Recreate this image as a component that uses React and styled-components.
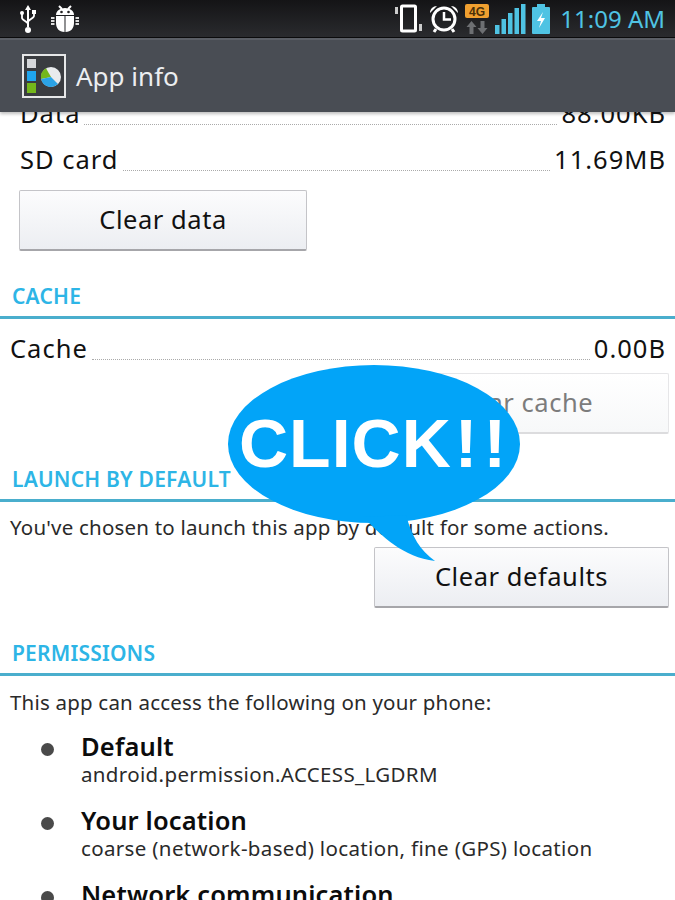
import React from 'react';
import styled, { createGlobalStyle } from 'styled-components';

const Global = createGlobalStyle`
  html, body {
    margin: 0;
    padding: 0;
    background: #fff;
  }
`;

const Screen = styled.div`
  position: relative;
  width: 675px;
  height: 900px;
  overflow: hidden;
  display: flex;
  flex-direction: column;
  background: #fff;
  font-family: 'Noto Sans', 'Open Sans', sans-serif;
  color: #111;
`;

const StatusBar = styled.div`
  height: 37px;
  flex: none;
  display: flex;
  align-items: center;
  justify-content: space-between;
  padding: 0 10px 0 19px;
  background: linear-gradient(#141416, #2a2b2e);
  border-bottom: 1px solid #0c0c0d;
`;

const IconGroup = styled.div`
  display: flex;
  align-items: center;
  gap: ${(p) => p.$gap}px;
`;

const Clock = styled.span`
  font-size: 24px;
  color: #4fc3e3;
  margin-left: 4px;
  white-space: nowrap;
`;

const ActionBar = styled.div`
  position: relative;
  z-index: 2;
  height: 72px;
  flex: none;
  display: flex;
  align-items: center;
  gap: 10px;
  padding: 0 0 0 22px;
  background: #494d54;
  border-top: 2px solid #5b5f66;
  box-shadow: 0 2px 3px rgba(0, 0, 0, 0.25);
`;

const BarTitle = styled.span`
  font-size: 26px;
  color: #eceef0;
`;

const Scroller = styled.div`
  flex: 1;
  overflow: hidden;
`;

const Inner = styled.div`
  margin-top: -16px;
  display: flex;
  flex-direction: column;
`;

const SizeRow = styled.div`
  box-sizing: border-box;
  display: flex;
  align-items: baseline;
  height: ${(p) => p.$h}px;
  padding: ${(p) => p.$top || 0}px 9px 0 ${(p) => p.$left}px;
  font-size: 25.5px;
  line-height: 34px;
  letter-spacing: 1px;
`;

const Dots = styled.span`
  flex: 1;
  margin: 0 4px;
  border-bottom: 1px dotted #aaa;
  transform: translateY(2px);
`;

const ButtonRow = styled.div`
  display: flex;
  justify-content: ${(p) => (p.$right ? 'flex-end' : 'flex-start')};
  padding: ${(p) => (p.$right ? '0 6px 0 0' : '0 0 0 19px')};
`;

const Button = styled.div`
  box-sizing: border-box;
  width: ${(p) => (p.$right ? 295 : 288)}px;
  height: 61px;
  padding-bottom: 2px;
  display: flex;
  align-items: center;
  justify-content: center;
  font-size: 25.5px;
  letter-spacing: 0.55px;
  color: ${(p) => (p.$off ? '#7c7c7c' : '#111')};
  background: ${(p) => (p.$off ? 'linear-gradient(#ffffff, #f7f8f9)' : 'linear-gradient(#fcfcfd, #eceef2)')};
  border: 1px solid ${(p) => (p.$off ? '#e6e6e8' : '#c4c4c8')};
  border-bottom: 2px solid ${(p) => (p.$off ? '#dcdcde' : '#a6a6aa')};
  border-radius: 2px;
`;

const Section = styled.div`
  box-sizing: border-box;
  height: 34px;
  margin-top: ${(p) => p.$top}px;
  padding-left: 12px;
  font-size: 21px;
  font-weight: 600;
  line-height: 28px;
  letter-spacing: 0.2px;
  color: #2db5e6;
`;

const Rule = styled.div`
  height: 3px;
  background: #4aaecd;
`;

const Note = styled.div`
  padding: ${(p) => p.$pad}px 0 0 10px;
  height: ${(p) => p.$h}px;
  box-sizing: border-box;
  font-size: 20.5px;
  line-height: 28px;
  letter-spacing: 0.2px;
  color: #2a2a2a;
  white-space: nowrap;
`;

const Perm = styled.div`
  display: grid;
  grid-template-columns: 81px 1fr;
  height: 74px;
  align-items: start;
`;

const Bullet = styled.span`
  justify-self: end;
  width: 13px;
  height: 13px;
  margin: 13px 27px 0 0;
  border-radius: 50%;
  background: #4a4a4a;
`;

const PermName = styled.div`
  font-size: 25.5px;
  font-weight: 600;
  line-height: 32px;
  letter-spacing: 0.15px;
  color: #0c0c0c;
  white-space: nowrap;
`;

const PermDetail = styled.div`
  font-size: 20.5px;
  line-height: 25px;
  letter-spacing: 0.35px;
  color: #2a2a2a;
  white-space: nowrap;
`;

const Bubble = styled.div`
  position: absolute;
  left: 228px;
  top: 365px;
  width: 292px;
  height: 198px;
  z-index: 3;
`;

const BubbleShape = styled.svg`
  display: block;
`;

const BubbleText = styled.span`
  position: absolute;
  left: 11px;
  top: 38px;
  font-family: 'Liberation Sans', Arial, sans-serif;
  font-weight: 700;
  font-size: 68px;
  line-height: 80px;
  letter-spacing: 1px;
  color: #fff;
  white-space: nowrap;
`;

const Bang = styled.span`
  letter-spacing: 6px;
  margin-left: 3px;
`;

const UsbIcon = () => (
  <svg width="18" height="30" viewBox="0 0 18 30">
    <path d="M9 1l3 5h-2v17H8V6H6z" fill="#fff" />
    <circle cx="9" cy="26" r="3" fill="#fff" />
    <path d="M3 10v4c0 2 6 4 6 6M15 9v3c0 2-6 4-6 6" fill="none" stroke="#fff" strokeWidth="1.8" />
    <circle cx="3" cy="9" r="2" fill="#fff" />
    <rect x="13" y="6" width="4" height="4" fill="#fff" />
  </svg>
);

const BugIcon = () => (
  <svg width="28" height="28" viewBox="0 0 28 28">
    <path d="M8 1l3 3M20 1l-3 3" stroke="#fff" strokeWidth="2" />
    <path d="M5 10c0-4 4-7 9-7s9 3 9 7z" fill="#fff" />
    <path d="M5 11h8.500v16C8 27 5 23 5 18zM23 11h-8.500v16C20 27 23 23 23 18z" fill="#fff" />
    <circle cx="10.500" cy="7" r="1.300" fill="#222" />
    <circle cx="17.500" cy="7" r="1.300" fill="#222" />
    <path d="M0 13h3.500M0 16h3.500M0 19h3.500M24.500 13h3.500M24.500 16h3.500M24.500 19h3.500" stroke="#ddd" strokeWidth="2" />
  </svg>
);

const VibrateIcon = () => (
  <svg width="29" height="30" viewBox="0 0 29 30">
    <rect x="7.500" y="2" width="14" height="25" rx="1" fill="none" stroke="#fff" strokeWidth="3" />
    <rect x="1" y="3" width="3" height="7" fill="#ccc" />
    <rect x="25" y="20" width="3" height="7" fill="#ccc" />
  </svg>
);

const AlarmIcon = () => (
  <svg width="30" height="30" viewBox="0 0 30 30">
    <circle cx="15" cy="15" r="11" fill="none" stroke="#fff" strokeWidth="3" />
    <path d="M15 8v7.500h7" fill="none" stroke="#fff" strokeWidth="2.500" />
    <path d="M1 9c0-4 3-7 7-7zM29 9c0-4-3-7-7-7z" fill="#fff" />
    <path d="M7 25l-2 3M23 25l2 3" stroke="#fff" strokeWidth="3" />
  </svg>
);

const NetworkIcon = () => (
  <svg width="24" height="30" viewBox="0 0 24 30">
    <rect x="0" y="0" width="24" height="14" rx="2" fill="#f0a030" />
    <text x="12" y="11.500" textAnchor="middle" fontFamily="Liberation Sans, sans-serif" fontWeight="700" fontSize="12" fill="#4a2f08">4G</text>
    <path d="M6.500 17l5 6h-3v7h-4v-7h-3zM17.500 30l-5-6h3v-7h4v7h3z" fill="#6d6f72" />
  </svg>
);

const SignalIcon = () => (
  <svg width="31" height="30" viewBox="0 0 31 30">
    <rect x="0" y="21" width="4.500" height="9" fill="#4fc3e3" />
    <rect x="6.500" y="15" width="4.500" height="15" fill="#4fc3e3" />
    <rect x="13" y="9" width="4.500" height="21" fill="#4fc3e3" />
    <rect x="19.500" y="4" width="4.500" height="26" fill="#4fc3e3" />
    <rect x="26" y="0" width="4.500" height="30" fill="#4fc3e3" />
  </svg>
);

const BatteryIcon = () => (
  <svg width="18" height="30" viewBox="0 0 18 30">
    <rect x="5" y="0" width="8" height="3" fill="#4fc3e3" />
    <rect x="0" y="3" width="18" height="27" rx="1" fill="#4fc3e3" />
    <path d="M11 8l-6 9h4l-2 7 6-10H9z" fill="#fff" />
  </svg>
);

const AppIcon = () => (
  <svg width="44" height="44" viewBox="0 0 44 44">
    <rect x="1" y="1" width="42" height="42" fill="#3a3c40" stroke="#e6e7e8" strokeWidth="2" />
    <rect x="5" y="5" width="9" height="9" fill="#d5d7da" />
    <rect x="5" y="17" width="9" height="10" fill="#1fa5ee" />
    <rect x="5" y="29" width="9" height="10" fill="#74b71b" />
    <circle cx="29" cy="23" r="10" fill="#e9ebed" />
    <path d="M29 23L24 14.340A10 10 0 0 0 19.200 25z" fill="#74b71b" />
    <path d="M29 23L19.200 25A10 10 0 0 0 36 30.100z" fill="#2ba3e6" />
  </svg>
);

const permissions = [
  { name: 'Default', detail: 'android.permission.ACCESS_LGDRM' },
  { name: 'Your location', detail: 'coarse (network-based) location, fine (GPS) location' },
  { name: 'Network communication', detail: '' },
];

const App = () => (
  <Screen>
    <Global />
    <StatusBar>
      <IconGroup $gap={14}>
        <UsbIcon />
        <BugIcon />
      </IconGroup>
      <IconGroup $gap={6}>
        <VibrateIcon />
        <AlarmIcon />
        <NetworkIcon />
        <SignalIcon />
        <BatteryIcon />
        <Clock>11:09 AM</Clock>
      </IconGroup>
    </StatusBar>
    <ActionBar>
      <AppIcon />
      <BarTitle>App info</BarTitle>
    </ActionBar>
    <Scroller>
      <Inner>
        <SizeRow $h={46} $left={20}>
          Data
          <Dots />
          88.00KB
        </SizeRow>
        <SizeRow $h={48} $left={20}>
          SD card
          <Dots />
          11.69MB
        </SizeRow>
        <ButtonRow>
          <Button>Clear data</Button>
        </ButtonRow>
        <Section $top={31}>CACHE</Section>
        <Rule />
        <SizeRow $h={54} $left={10} $top={12}>
          Cache
          <Dots />
          0.00B
        </SizeRow>
        <ButtonRow $right>
          <Button $right $off>Clear cache</Button>
        </ButtonRow>
        <Section $top={31}>LAUNCH BY DEFAULT</Section>
        <Rule />
        <Note $h={45} $pad={11}>You've chosen to launch this app by default for some actions.</Note>
        <ButtonRow $right>
          <Button $right>Clear defaults</Button>
        </ButtonRow>
        <Section $top={31}>PERMISSIONS</Section>
        <Rule />
        <Note $h={54} $pad={12}>This app can access the following on your phone:</Note>
        {permissions.map((p) => (
          <Perm key={p.name}>
            <Bullet />
            <div>
              <PermName>{p.name}</PermName>
              <PermDetail>{p.detail}</PermDetail>
            </div>
          </Perm>
        ))}
      </Inner>
    </Scroller>
    <Bubble>
      <BubbleShape width="292" height="198" viewBox="0 0 292 198">
        <ellipse cx="146" cy="79" rx="146" ry="79" fill="#02a4f8" />
        <path d="M135 152C155 172 175 192 207 196C192 185 184 172 178 150z" fill="#02a4f8" />
      </BubbleShape>
      <BubbleText>CLICK<Bang>!!</Bang></BubbleText>
    </Bubble>
  </Screen>
);

export default App;
